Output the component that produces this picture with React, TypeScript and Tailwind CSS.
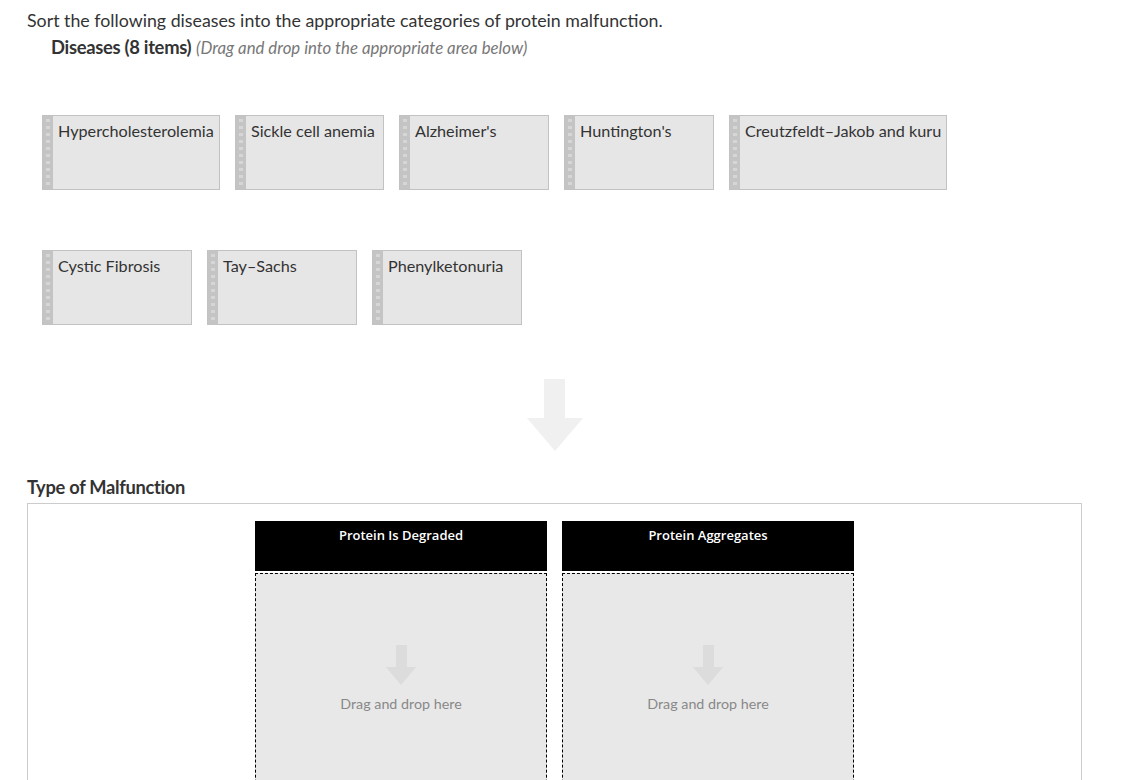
import React from 'react';

const rowOne = [
  { label: 'Hypercholesterolemia', w: 'w-[178px]' },
  { label: 'Sickle cell anemia', w: 'w-[149px]' },
  { label: "Alzheimer's", w: 'w-[150px]' },
  { label: "Huntington's", w: 'w-[150px]' },
  { label: 'Creutzfeldt–Jakob and kuru', w: 'w-[218px]' },
];

const rowTwo = [
  { label: 'Cystic Fibrosis', w: 'w-[150px]' },
  { label: 'Tay–Sachs', w: 'w-[150px]' },
  { label: 'Phenylketonuria', w: 'w-[150px]' },
];

const categories = ['Protein Is Degraded', 'Protein Aggregates'];

const Grip = () => (
  <div className="w-[10px] shrink-0 bg-[#c4c4c4] flex flex-col items-center gap-[4px] pt-[3px]">
    {Array.from({ length: 10 }).map((_, i) => (
      <div key={i} className="w-[4px] h-[3px] bg-[#d6d6d6]" />
    ))}
  </div>
);

const Card = ({ label, w }: { label: string; w: string }) => (
  <div className={`${w} h-[75px] flex border border-[#c2c2c2] bg-[#e6e6e6] overflow-hidden`}>
    <Grip />
    <div className="pl-[5px] pt-[5px] text-[16.2px] leading-[20px] text-[#333] whitespace-nowrap">
      {label}
    </div>
  </div>
);

const Column = ({ title }: { title: string }) => (
  <div className="w-[292px] flex flex-col gap-[2px]">
    <div className="h-[50px] bg-black text-white text-center pt-[5px] text-[13px] font-semibold font-['Open_Sans',sans-serif]">
      {title}
    </div>
    <div className="h-[240px] border border-dashed border-black bg-[#e8e8e8] flex flex-col items-center pt-[71px]">
      <svg width="30" height="41" viewBox="0 0 30 41">
        <path d="M10 0 H21 V22 H30 L15 40 L0 22 H10 Z" fill="#dcdcdc" />
      </svg>
      <div className="mt-[7px] text-[14.3px] text-[#888]">Drag and drop here</div>
    </div>
  </div>
);

const App = () => {
  return (
    <div className="min-h-screen bg-white font-['Lato',sans-serif] text-[#333] pl-[27px] pr-[41px] pt-[8px] overflow-hidden h-[780px]">
      <p className="text-[17.8px] leading-[24px] whitespace-nowrap">
        Sort the following diseases into the appropriate categories of protein malfunction.
      </p>
      <p className="pl-[24px] mt-[3px] text-[18.4px] leading-[24px] whitespace-nowrap">
        <span className="font-bold tracking-[-0.3px]">Diseases (8 items)</span>{' '}
        <span className="italic text-[16.8px] text-[#777]">(Drag and drop into the appropriate area below)</span>
      </p>

      <div className="pl-[15px] mt-[55px] flex flex-col gap-[60px]">
        <div className="flex gap-[15px]">
          {rowOne.map((c) => (
            <Card key={c.label} {...c} />
          ))}
        </div>
        <div className="flex gap-[15px]">
          {rowTwo.map((c) => (
            <Card key={c.label} {...c} />
          ))}
        </div>
      </div>

      <div className="flex justify-center mt-[54px] pl-[1px]">
        <svg width="56" height="72" viewBox="0 0 56 72">
          <path d="M17 0 H38 V39 H56 L28 72 L0 39 H17 Z" fill="#f0f0f0" />
        </svg>
      </div>

      <h2 className="mt-[24px] text-[18.3px] leading-[24px] font-bold tracking-[-0.3px]">Type of Malfunction</h2>
      <div className="mt-[4px] w-[1055px] h-[400px] border border-[#ccc] flex justify-center gap-[15px] pt-[17px]">
        {categories.map((t) => (
          <Column key={t} title={t} />
        ))}
      </div>
    </div>
  );
};

export default App;
